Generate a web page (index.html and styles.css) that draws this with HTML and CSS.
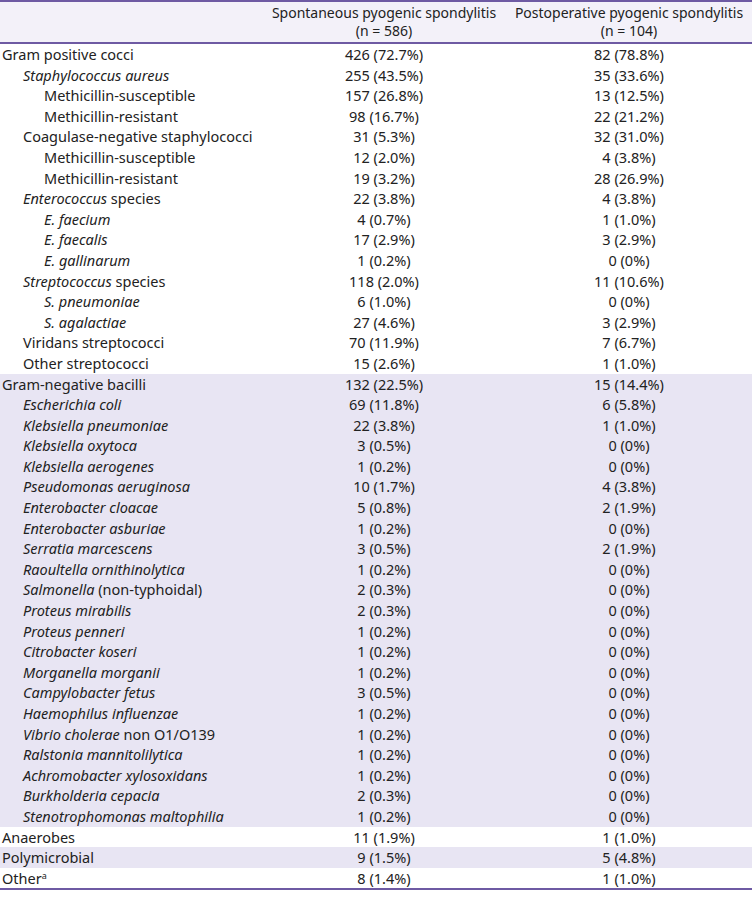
FILE: index.html
```html
<!DOCTYPE html>
<html>
<head>
<meta charset="utf-8">
<link rel="stylesheet" href="styles.css">
</head>
<body>
<table class="tbl">
<colgroup><col class="c1"><col class="c2"><col class="c3"></colgroup>
<thead>
<tr><th></th><th>Spontaneous pyogenic spondylitis<br>(n = 586)</th><th>Postoperative pyogenic spondylitis<br>(n = 104)</th></tr>
</thead>
<tbody class="grp">
<tr><td class="l0">Gram positive cocci</td><td>426 (72.7%)</td><td>82 (78.8%)</td></tr>
<tr><td class="l1"><i>Staphylococcus aureus</i></td><td>255 (43.5%)</td><td>35 (33.6%)</td></tr>
<tr><td class="l2">Methicillin-susceptible</td><td>157 (26.8%)</td><td>13 (12.5%)</td></tr>
<tr><td class="l2">Methicillin-resistant</td><td>98 (16.7%)</td><td>22 (21.2%)</td></tr>
<tr><td class="l1">Coagulase-negative staphylococci</td><td>31 (5.3%)</td><td>32 (31.0%)</td></tr>
<tr><td class="l2">Methicillin-susceptible</td><td>12 (2.0%)</td><td>4 (3.8%)</td></tr>
<tr><td class="l2">Methicillin-resistant</td><td>19 (3.2%)</td><td>28 (26.9%)</td></tr>
<tr><td class="l1"><i>Enterococcus</i> species</td><td>22 (3.8%)</td><td>4 (3.8%)</td></tr>
<tr><td class="l2"><i>E. faecium</i></td><td>4 (0.7%)</td><td>1 (1.0%)</td></tr>
<tr><td class="l2"><i>E. faecalis</i></td><td>17 (2.9%)</td><td>3 (2.9%)</td></tr>
<tr><td class="l2"><i>E. gallinarum</i></td><td>1 (0.2%)</td><td>0 (0%)</td></tr>
<tr><td class="l1"><i>Streptococcus</i> species</td><td>118 (2.0%)</td><td>11 (10.6%)</td></tr>
<tr><td class="l2"><i>S. pneumoniae</i></td><td>6 (1.0%)</td><td>0 (0%)</td></tr>
<tr><td class="l2"><i>S. agalactiae</i></td><td>27 (4.6%)</td><td>3 (2.9%)</td></tr>
<tr><td class="l1">Viridans streptococci</td><td>70 (11.9%)</td><td>7 (6.7%)</td></tr>
<tr><td class="l1">Other streptococci</td><td>15 (2.6%)</td><td>1 (1.0%)</td></tr>
</tbody>
<tbody class="grp shade">
<tr><td class="l0">Gram-negative bacilli</td><td>132 (22.5%)</td><td>15 (14.4%)</td></tr>
<tr><td class="l1"><i>Escherichia coli</i></td><td>69 (11.8%)</td><td>6 (5.8%)</td></tr>
<tr><td class="l1"><i>Klebsiella pneumoniae</i></td><td>22 (3.8%)</td><td>1 (1.0%)</td></tr>
<tr><td class="l1"><i>Klebsiella oxytoca</i></td><td>3 (0.5%)</td><td>0 (0%)</td></tr>
<tr><td class="l1"><i>Klebsiella aerogenes</i></td><td>1 (0.2%)</td><td>0 (0%)</td></tr>
<tr><td class="l1"><i>Pseudomonas aeruginosa</i></td><td>10 (1.7%)</td><td>4 (3.8%)</td></tr>
<tr><td class="l1"><i>Enterobacter cloacae</i></td><td>5 (0.8%)</td><td>2 (1.9%)</td></tr>
<tr><td class="l1"><i>Enterobacter asburiae</i></td><td>1 (0.2%)</td><td>0 (0%)</td></tr>
<tr><td class="l1"><i>Serratia marcescens</i></td><td>3 (0.5%)</td><td>2 (1.9%)</td></tr>
<tr><td class="l1"><i>Raoultella ornithinolytica</i></td><td>1 (0.2%)</td><td>0 (0%)</td></tr>
<tr><td class="l1"><i>Salmonella</i> (non-typhoidal)</td><td>2 (0.3%)</td><td>0 (0%)</td></tr>
<tr><td class="l1"><i>Proteus mirabilis</i></td><td>2 (0.3%)</td><td>0 (0%)</td></tr>
<tr><td class="l1"><i>Proteus penneri</i></td><td>1 (0.2%)</td><td>0 (0%)</td></tr>
<tr><td class="l1"><i>Citrobacter koseri</i></td><td>1 (0.2%)</td><td>0 (0%)</td></tr>
<tr><td class="l1"><i>Morganella morganii</i></td><td>1 (0.2%)</td><td>0 (0%)</td></tr>
<tr><td class="l1"><i>Campylobacter fetus</i></td><td>3 (0.5%)</td><td>0 (0%)</td></tr>
<tr><td class="l1"><i>Haemophilus influenzae</i></td><td>1 (0.2%)</td><td>0 (0%)</td></tr>
<tr><td class="l1"><i>Vibrio cholerae</i> non O1/O139</td><td>1 (0.2%)</td><td>0 (0%)</td></tr>
<tr><td class="l1"><i>Ralstonia mannitolilytica</i></td><td>1 (0.2%)</td><td>0 (0%)</td></tr>
<tr><td class="l1"><i>Achromobacter xylosoxidans</i></td><td>1 (0.2%)</td><td>0 (0%)</td></tr>
<tr><td class="l1"><i>Burkholderia cepacia</i></td><td>2 (0.3%)</td><td>0 (0%)</td></tr>
<tr><td class="l1"><i>Stenotrophomonas maltophilia</i></td><td>1 (0.2%)</td><td>0 (0%)</td></tr>
</tbody>
<tbody class="grp">
<tr><td class="l0">Anaerobes</td><td>11 (1.9%)</td><td>1 (1.0%)</td></tr>
</tbody>
<tbody class="grp shade">
<tr><td class="l0">Polymicrobial</td><td>9 (1.5%)</td><td>5 (4.8%)</td></tr>
</tbody>
<tbody class="grp last">
<tr><td class="l0">Other<sup>a</sup></td><td>8 (1.4%)</td><td>1 (1.0%)</td></tr>
</tbody>
</table>
</body>
</html>
```
FILE: styles.css
```css
html, body {
  margin: 0;
  padding: 0;
  background: #ffffff;
}
.tbl {
  width: 752px;
  border-collapse: collapse;
  table-layout: fixed;
  font-family: "Noto Sans", "Open Sans", sans-serif;
  font-size: 14.5px;
  color: #222222;
  border-top: 2px solid #6e5aa3;
  border-bottom: 2px solid #6e5aa3;
}
.c1 { width: 262px; }
.c2 { width: 244px; }
.c3 { width: 246px; }
.tbl thead th {
  font-weight: normal;
  font-size: 14px;
  text-align: center;
  line-height: 18px;
  padding: 2px 0;
  height: 36px;
  background: #f3f1f9;
  border-bottom: 2px solid #6e5aa3;
  white-space: nowrap;
}
.tbl td {
  padding: 0;
  height: 20.6px;
  line-height: 20.6px;
  white-space: nowrap;
  text-align: center;
}
.tbl td.l0 { text-align: left; padding-left: 2px; }
.tbl td.l1 { text-align: left; padding-left: 23px; }
.tbl td.l2 { text-align: left; padding-left: 44px; }
.shade td { background: #e8e5f3; }
.tbl sup {
  font-size: 9px;
  line-height: 0;
  vertical-align: 5px;
}
```
